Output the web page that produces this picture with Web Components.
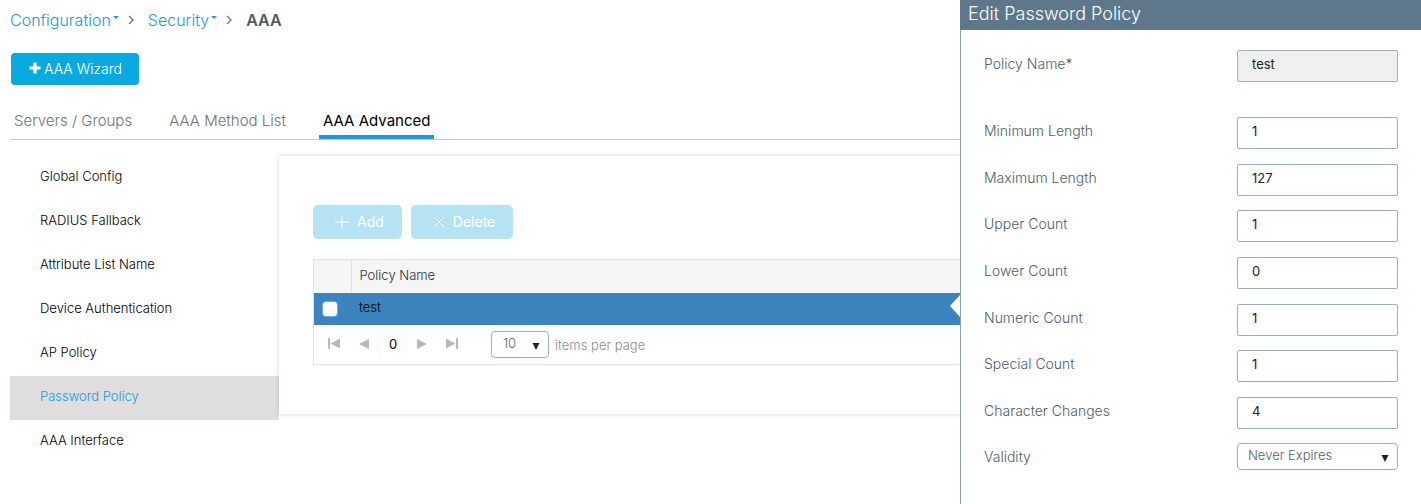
<!DOCTYPE html>
<html lang="en">
<head>
<meta charset="utf-8">
<title>AAA - Password Policy</title>
<style>
  body {
    margin: 0;
    background: #fff;
    font-family: Inter, "Liberation Sans", sans-serif;
    font-size: 14px;
    --accent: #0aa9e0;
    --field-border: #97b1be;
  }
</style>
</head>
<body>
<aaa-page>
  <crumb-trail slot="main"></crumb-trail>
  <action-button slot="main" icon="plus">AAA Wizard</action-button>
  <tab-bar slot="main"></tab-bar>
  <side-menu slot="menu"></side-menu>
  <policy-card slot="content"></policy-card>
  <edit-panel slot="panel" heading="Edit Password Policy">
    <form-field label="Policy Name*" value="test" readonly slot="lead"></form-field>
    <form-field label="Minimum Length" value="1"></form-field>
    <form-field label="Maximum Length" value="127"></form-field>
    <form-field label="Upper Count" value="1"></form-field>
    <form-field label="Lower Count" value="0"></form-field>
    <form-field label="Numeric Count" value="1"></form-field>
    <form-field label="Special Count" value="1"></form-field>
    <form-field label="Character Changes" value="4"></form-field>
    <form-field label="Validity" value="Never Expires" type="select"></form-field>
  </edit-panel>
</aaa-page>

<script>
const define = (name, render) => customElements.define(name, class extends HTMLElement {
  connectedCallback() {
    if (this.shadowRoot) return;
    this.attachShadow({ mode: 'open' }).innerHTML =
      '<style>*{box-sizing:border-box}button,input,select{font:inherit;margin:0}</style>' + render(this);
  }
});

define('aaa-page', () => `
  <style>
    :host { display: grid; grid-template-columns: minmax(0, 1fr) 461px; min-height: 100vh; }
    main { overflow: hidden; padding-left: 10px; }
    .body { display: grid; grid-template-columns: 269px minmax(0, 1fr); padding-top: 16px; align-items: start; }
  </style>
  <main>
    <slot name="main"></slot>
    <div class="body"><slot name="menu"></slot><slot name="content"></slot></div>
  </main>
  <slot name="panel"></slot>`);

define('crumb-trail', () => `
  <style>
    :host { display: block; }
    nav { display: flex; align-items: center; height: 40px; font-size: 16px; font-weight: 300; }
    a { display: flex; align-items: center; gap: 2px; color: #2b93d6; text-decoration: none; }
    .caret { margin-bottom: 6px; }
    .sep { margin: 0 14px 0 9px; }
    b { font-weight: 600; color: #525960; }
  </style>
  <nav aria-label="Breadcrumb">
    <a href="#">Configuration<svg class="caret" width="6" height="3"><path d="M0 0h6L3 3z" fill="#2b93d6"/></svg></a>
    <svg class="sep" width="6" height="10"><path d="M1 1l4 4-4 4" fill="none" stroke="#777d84" stroke-width="1.5"/></svg>
    <a href="#">Security<svg class="caret" width="6" height="3"><path d="M0 0h6L3 3z" fill="#2b93d6"/></svg></a>
    <svg class="sep" width="6" height="10"><path d="M1 1l4 4-4 4" fill="none" stroke="#777d84" stroke-width="1.5"/></svg>
    <b>AAA</b>
  </nav>`);

const icons = {
  plus: '<svg width="12" height="12"><path d="M6 0.5v11M0.5 6h11" stroke="#fff" stroke-width="3.2"/></svg>',
  add: '<svg width="14" height="14"><path d="M7 0v14M0 7h14" stroke="#fff" stroke-width="1"/></svg>',
  remove: '<svg width="12" height="12"><path d="M1 1l10 10M11 1L1 11" stroke="#fff" stroke-width="1"/></svg>'
};
define('action-button', el => `
  <style>
    :host { display: block; padding: 13px 0 0 1px; }
    :host([disabled]) { padding: 0; }
    button { display: flex; align-items: center; gap: 3px; height: 32px; padding: 0 17px 2px 18px; border: 0;
      border-radius: 4px; background: var(--accent); color: #fff; font-size: 14px; font-weight: 300; }
    button:disabled { height: 34px; gap: 8px; padding: 0 18px 2px 22px; border-radius: 5px;
      background: #b5e3f4; font-weight: 400; }
    button:disabled svg { margin-top: 2px; }
  </style>
  <button type="button" ${el.hasAttribute('disabled') ? 'disabled' : ''}>${icons[el.getAttribute('icon')]}<slot></slot></button>`);

define('tab-bar', () => `
  <style>
    :host { display: block; margin-top: 19px; }
    nav { display: flex; gap: 29px; border-bottom: 1px solid #c4c7ca; font-size: 15px; font-weight: 300; }
    a { height: 35px; padding: 0 4px; line-height: 34px; color: #6c727a; text-decoration: none; white-space: nowrap; }
    a[aria-current] { border-bottom: 4px solid #1a9ccf; color: #000; font-weight: 400; }
  </style>
  <nav aria-label="AAA sections">
    <a href="#">Servers / Groups</a>
    <a href="#">AAA Method List</a>
    <a href="#" aria-current="page">AAA Advanced</a>
  </nav>`);

define('side-menu', () => `
  <style>
    :host { display: block; }
    nav { display: grid; grid-auto-rows: 44px; font-size: 13px; font-weight: 300; }
    a { padding-left: 30px; line-height: 41px; color: #000; text-decoration: none; }
    a[aria-current] { background: #dfdddd; color: #0a9fe8; }
  </style>
  <nav aria-label="AAA Advanced">
    <a href="#">Global Config</a>
    <a href="#">RADIUS Fallback</a>
    <a href="#">Attribute List Name</a>
    <a href="#">Device Authentication</a>
    <a href="#">AP Policy</a>
    <a href="#" aria-current="page">Password Policy</a>
    <a href="#">AAA Interface</a>
  </nav>`);

define('policy-card', () => `
  <style>
    :host { display: block; padding: 49px 0 49px 34px; background: #fff; box-shadow: 0 0 5px rgba(0, 0, 0, .18); }
    .actions { display: flex; gap: 9px; margin-bottom: 20px; }
    .grid { border: 1px solid #e2e2e2; border-right: 0; }
    table { width: 100%; border-collapse: collapse; font-size: 13px; }
    th, td { padding: 0; text-align: left; }
    th { height: 33px; padding: 0 8px 4px; background: #f5f5f5; color: #2c3136; font-weight: 300; }
    th:first-child { width: 37px; border-right: 1px solid #e2e2e2; }
    td { height: 32px; padding: 0 8px 4px; background: #3c84bd; color: #000; font-weight: 300; }
    td:last-child { position: relative; }
    .pointer { position: absolute; right: 0; top: 2px; }
    .pick { padding: 0 0 0 8px; }
    input { display: block; appearance: none; width: 16px; height: 16px; border: 1px solid #6fa5e8;
      border-radius: 4px; background: #fff; }
  </style>
  <div class="actions">
    <action-button icon="add" disabled>Add</action-button>
    <action-button icon="remove" disabled>Delete</action-button>
  </div>
  <div class="grid">
    <table>
      <thead><tr><th></th><th>Policy Name</th></tr></thead>
      <tbody><tr>
        <td class="pick"><input type="checkbox" aria-label="Select test"></td>
        <td>test<svg class="pointer" width="10" height="22"><path d="M10 0v22L0 11z" fill="#fff"/></svg></td>
      </tr></tbody>
    </table>
    <grid-pager></grid-pager>
  </div>`);

define('grid-pager', () => `
  <style>
    :host { display: flex; align-items: center; height: 39px; padding-left: 5px; }
    button { display: grid; place-items: center; width: 30px; height: 28px; padding: 0 0 2px; border: 0; background: none; }
    path { fill: #b9b9b9; }
    input { width: 28px; height: 28px; padding: 0 0 2px; border: 1px solid #f8f8f8; border-bottom: 0;
      background: #fff; color: #000; text-align: center; font-size: 13px; }
    drop-down { width: 58px; margin: 0 6px 0 24px; --text: #5b6064; --inset: 11px; }
    label { color: #8c8c8c; font-size: 13px; font-weight: 300; }
  </style>
  <button type="button" aria-label="First page"><svg width="12" height="11"><path d="M0 0h2v11H0zM12 0.500v10L2.500 5.500z"/></svg></button>
  <button type="button" aria-label="Previous page"><svg width="10" height="10"><path d="M10 0v10L0 5z"/></svg></button>
  <input type="text" value="0" aria-label="Page">
  <button type="button" aria-label="Next page"><svg width="10" height="10"><path d="M0 0v10l10-5z"/></svg></button>
  <button type="button" aria-label="Last page"><svg width="12" height="11"><path d="M10 0h2v11h-2zM0 0.500v10l9.500-5z"/></svg></button>
  <drop-down><select id="size"><option>10</option></select></drop-down>
  <label for="size">items per page</label>`);

define('drop-down', () => `
  <style>
    :host { display: block; position: relative; font-size: 13px; font-weight: 300; }
    ::slotted(select) { display: block; appearance: none; width: 100%; height: 27px;
      padding: 0 20px 3px var(--inset, 10px); border: 1px solid var(--field-border);
      border-radius: 4px; background: #fff; color: var(--text, #54626d); }
    svg { position: absolute; right: 9px; bottom: 8px; pointer-events: none; }
  </style>
  <slot></slot>
  <svg width="8" height="7"><path d="M0.500 0h7L4 7z" fill="#222"/></svg>`);

define('edit-panel', el => `
  <style>
    :host { display: flex; flex-direction: column; border-left: 1px solid #8ba0af; background: #fff; }
    h2 { margin: 0 0 0 -1px; height: 30px; padding-left: 8px; background: #5e778b; color: #fff;
      font-size: 18px; font-weight: 300; line-height: 27px; }
    form { flex: 1; display: flex; flex-direction: column; padding: 20px 23px 14px; }
    .lead { height: 67px; }
    .rows { flex: 1; display: grid; grid-auto-rows: 1fr; align-items: start; }
  </style>
  <h2>${el.getAttribute('heading')}</h2>
  <form>
    <div class="lead"><slot name="lead"></slot></div>
    <div class="rows"><slot></slot></div>
  </form>`);

define('form-field', el => {
  const label = el.getAttribute('label');
  const value = el.getAttribute('value');
  const control = el.getAttribute('type') === 'select'
    ? `<drop-down><select id="field"><option>${value}</option></select></drop-down>`
    : `<input id="field" type="text" value="${value}" ${el.hasAttribute('readonly') ? 'readonly' : ''}>`;
  return `
  <style>
    :host { display: grid; grid-template-columns: minmax(0, 1fr) 161px; align-items: start; }
    label { color: #4f5d68; font-size: 14px; font-weight: 300; line-height: 28px; }
    input { width: 100%; height: 32px; padding: 0 14px 4px; border: 1px solid var(--field-border);
      border-radius: 2px; background: #fff; color: #222; font-size: 13px; font-weight: 400; }
    input:read-only { background: #efefef; }
  </style>
  <label for="field">${label}</label>${control}`;
});
</script>
</body>
</html>
